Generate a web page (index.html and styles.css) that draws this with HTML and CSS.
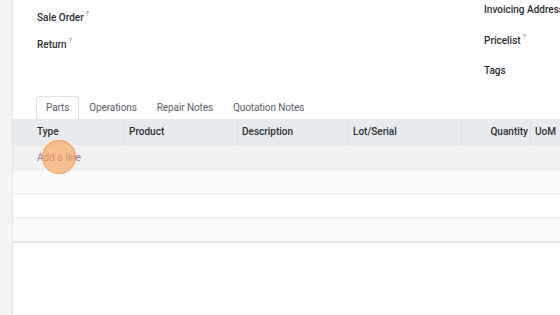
FILE: index.html
```html
<!DOCTYPE html>
<html>
<head>
<meta charset="utf-8">
<link rel="stylesheet" href="styles.css">
</head>
<body>
<div class="side"></div>
<div class="main">
  <div class="fields">
    <div class="col-left">
      <div class="label l-sale">Sale Order<sup>?</sup></div>
      <div class="label l-return">Return<sup>?</sup></div>
    </div>
    <div class="col-right">
      <div class="label r-inv">Invoicing Address</div>
      <div class="label r-price">Pricelist<sup>?</sup></div>
      <div class="label r-tags">Tags</div>
    </div>
  </div>
  <div class="tabs">
    <div class="tab active">Parts</div>
    <div class="tab">Operations</div>
    <div class="tab">Repair Notes</div>
    <div class="tab">Quotation Notes</div>
  </div>
  <div class="table">
    <div class="row head">
      <div class="c c1">Type</div>
      <div class="c c2">Product</div>
      <div class="c c3">Description</div>
      <div class="c c4">Lot/Serial</div>
      <div class="c c5 num">Quantity</div>
      <div class="c c6">UoM</div>
    </div>
    <div class="row add"><span class="addlink">Add a line</span><span class="dot"></span></div>
    <div class="row odd"></div>
    <div class="row even"></div>
    <div class="row odd last"></div>
  </div>
</div>
</body>
</html>
```
FILE: styles.css
```css
html, body { margin: 0; padding: 0; }
body {
  width: 560px; height: 315px; overflow: hidden;
  display: flex; background: #fff;
  font-family: "Roboto", "Open Sans", sans-serif;
  color: #212529;
}
.side { width: 12px; flex: none; background: #f3f4f6; border-right: 1px solid #e2e4e8; }
.main { flex: 1; min-width: 0; overflow: hidden; }
.fields { height: 96px; display: flex; }
.col-left { flex: none; width: 447px; padding-left: 24px; }
.col-right { flex: none; }
.label { font-size: 10px; font-weight: 500; color: #2b2f33; line-height: 14px; white-space: nowrap; }
.label sup { font-size: 6.5px; color: #6c757d; margin-left: 2px; font-weight: 400; vertical-align: 5px; }
.l-sale { margin-top: 7px; }
.l-return { margin-top: 9px; }
.r-inv { margin-top: 3px; }
.r-price { margin-top: 13px; }
.r-tags { margin-top: 16px; }
.tabs { display: flex; height: 23px; padding-left: 23px; }
.tab { font-size: 10px; letter-spacing: -0.1px; color: #5a6066; padding: 0 9px; line-height: 22px; border: 1px solid transparent; border-bottom: none; box-sizing: border-box; height: 23px; }
.tab.active { border-color: #dee2e6; border-radius: 3px 3px 0 0; background: #fff; }
.row { display: flex; height: 24px; box-sizing: border-box; }
.head { height: 26px; background: #e8ebee; }
.c { font-size: 10px; font-weight: 500; color: #2b2f33; line-height: 26px; padding-left: 4px; border-right: 1px solid #dde1e5; box-sizing: border-box; white-space: nowrap; }
.c1 { width: 112px; padding-left: 24px; }
.c2 { width: 113px; }
.c3 { width: 111px; }
.c4 { width: 113px; }
.c5 { width: 69px; text-align: right; padding-right: 2px; }
.c6 { flex: 1; border-right: none; }
.add { height: 25px; background: #f1f1f1; position: relative; padding-left: 24px; }
.addlink { font-size: 10px; color: #8a8094; line-height: 25px; }
.dot { position: absolute; left: 29px; top: -5px; width: 34px; height: 34px; border-radius: 50%; background: rgba(251, 160, 80, 0.6); border: 1px solid rgba(245, 150, 60, 0.8); box-sizing: border-box; }
.odd { background: #fafafa; border-bottom: 1px solid #ebebeb; }
.even { background: #fff; border-bottom: 1px solid #ebebeb; }
.last { height: 25px; border-bottom: 2px solid #e6e6e6; }
```
